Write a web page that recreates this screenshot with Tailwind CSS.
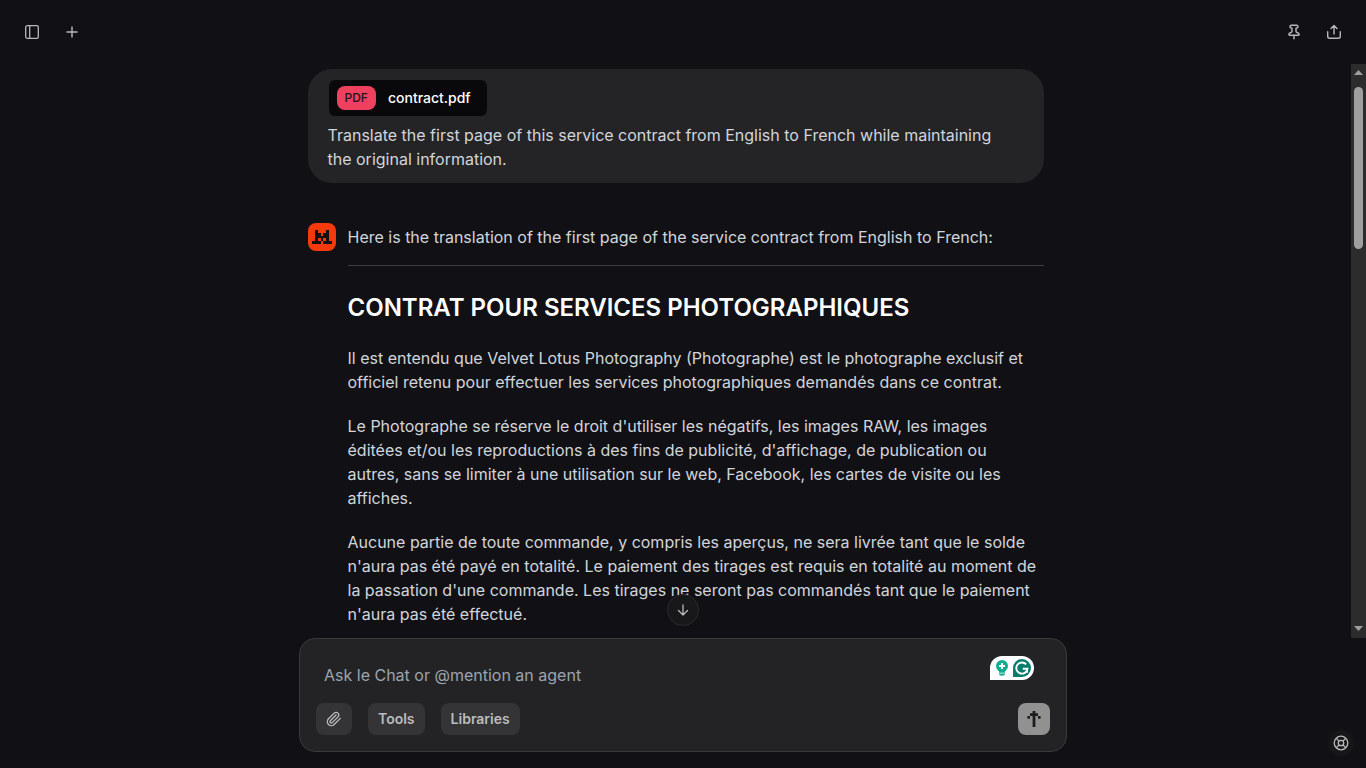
<!DOCTYPE html>
<html lang="en">
<head>
<meta charset="utf-8">
<meta name="viewport" content="width=device-width, initial-scale=1">
<title>le Chat</title>
<script src="https://cdn.jsdelivr.net/npm/@tailwindcss/browser@4"></script>
</head>
<body class="flex h-screen flex-col overflow-hidden bg-[#111115] font-['Inter','Liberation_Sans',sans-serif] text-[#d1d5db]">
<header class="flex h-16 shrink-0 items-center justify-between px-4 text-[#b8b8ba]">
  <div class="flex gap-2">
    <button aria-label="Toggle sidebar" class="grid size-8 place-items-center"><svg class="size-4" viewBox="0 0 16 16" fill="none" stroke="currentColor" stroke-width="1.3"><rect x="1.7" y="1.7" width="12.6" height="12.6" rx="1.6"/><path d="M5.7 2v12"/></svg></button>
    <button aria-label="New chat" class="grid size-8 place-items-center"><svg class="size-4" viewBox="0 0 16 16" fill="none" stroke="currentColor" stroke-width="1.4" stroke-linecap="round"><path d="M8 3v10M3 8h10"/></svg></button>
  </div>
  <div class="flex gap-2">
    <button aria-label="Pin" class="grid size-8 place-items-center"><svg class="size-4" viewBox="0 0 24 24" fill="none" stroke="currentColor" stroke-width="2.2" stroke-linecap="round" stroke-linejoin="round"><path d="M12 17v5M9 10.76a2 2 0 0 1-1.11 1.79l-1.78.9A2 2 0 0 0 4.500 15.24V16a1 1 0 0 0 1 1h13a1 1 0 0 0 1-1v-.76a2 2 0 0 0-1.610-1.79l-1.78-.9A2 2 0 0 1 15 10.76V7a1 1 0 0 1 1-1 2 2 0 0 0 0-4H8a2 2 0 0 0 0 4 1 1 0 0 1 1 1z"/></svg></button>
    <button aria-label="Share" class="grid size-8 place-items-center"><svg class="size-4" viewBox="0 0 16 16" fill="none" stroke="currentColor" stroke-width="1.4" stroke-linecap="round" stroke-linejoin="round"><path d="M8 10V1.7M5 4.5l3-3 3 3M1.7 7.7v4.6a2 2 0 0 0 2 2h8.600a2 2 0 0 0 2-2V7.700"/></svg></button>
  </div>
</header>

<div class="flex min-h-0 flex-1">
  <main class="min-w-0 flex-1 overflow-hidden">
    <div class="mx-auto flex max-w-[736px] flex-col gap-10 pt-[5px]">
      <section class="rounded-3xl bg-[#242426] px-5 pt-[11px] pb-3">
        <div class="ml-px flex h-9 w-fit items-center gap-3 rounded-md bg-[#09090b] pr-4 pl-2">
          <span class="flex h-6 items-center rounded-lg bg-[#ef4060] px-2 text-xs font-medium text-[#2a1018]">PDF</span>
          <span class="text-sm font-medium text-white">contract.pdf</span>
        </div>
        <p class="mt-[7px] pr-5 leading-6">Translate the first page of this service contract from English to French while maintaining the original information.</p>
      </section>
      <section class="flex gap-3">
        <div class="grid size-7 shrink-0 place-items-center rounded-lg bg-[#f23a0c]"><svg class="h-[14px] w-5" viewBox="0 0 7 5" preserveAspectRatio="none" fill="#15100f" shape-rendering="crispEdges" role="img" aria-label="le Chat"><path d="M1 0h1v1h1v1h1v-1h1v-1h1v4h1v1h-3v-1h1v-1h-1v1h-1v-1h-1v1h1v1h-3v-1h1z"/></svg></div>
        <article class="min-w-0 flex-1 leading-6">
          <p class="mt-[2px]">Here is the translation of the first page of the service contract from English to French:</p>
          <hr class="mt-4 border-[#3a3f49]">
          <h1 class="mt-6 text-2xl leading-9 font-semibold text-white">CONTRAT POUR SERVICES PHOTOGRAPHIQUES</h1>
          <p class="mt-5 pr-1">Il est entendu que Velvet Lotus Photography (Photographe) est le photographe exclusif et officiel retenu pour effectuer les services photographiques demandés dans ce contrat.</p>
          <p class="mt-5 pr-1">Le Photographe se réserve le droit d'utiliser les négatifs, les images RAW, les images éditées et/ou les reproductions à des fins de publicité, d'affichage, de publication ou autres, sans se limiter à une utilisation sur le web, Facebook, les cartes de visite ou les affiches.</p>
          <p class="mt-5 pr-1">Aucune partie de toute commande, y compris les aperçus, ne sera livrée tant que le solde n'aura pas été payé en totalité. Le paiement des tirages est requis en totalité au moment de la passation d'une commande. Les tirages ne seront pas commandés tant que le paiement n'aura pas été effectué.</p>
        </article>
      </section>
    </div>
  </main>
  <div class="flex w-[15px] shrink-0 flex-col items-center bg-[#2c2c2c]" aria-hidden="true">
    <svg class="mt-[6px] h-[5px] w-[9px]" viewBox="0 0 9 5" fill="#9f9f9f"><path d="M4.500 0 9 5H0z"/></svg>
    <div class="mt-3 h-[162px] w-[9px] rounded-full bg-[#9f9f9f]"></div>
    <svg class="mt-auto mb-[7px] h-[5px] w-[9px]" viewBox="0 0 9 5" fill="#9f9f9f"><path d="M0 0h9L4.500 5z"/></svg>
  </div>
</div>

<footer class="relative shrink-0 px-4 pb-4">
  <button aria-label="Scroll to bottom" class="absolute -top-11 left-1/2 grid size-8 -translate-x-1/2 place-items-center rounded-full border border-[#2a2a2c] bg-[#18181a] text-[#b8b8ba]"><svg class="size-4" viewBox="0 0 16 16" fill="none" stroke="currentColor" stroke-width="1.3" stroke-linecap="round" stroke-linejoin="round"><path d="M8 3v10M3.500 8.500 8 13l4.500-4.500"/></svg></button>
  <form class="relative mx-auto max-w-[768px] rounded-2xl border border-[#39393b] bg-[#232325] p-4">
    <input aria-label="Message" placeholder="Ask le Chat or @mention an agent" class="mt-2 block h-6 w-full px-2 leading-6 outline-none placeholder:text-[#9ca3af]">
    <div class="mt-4 flex items-center gap-4 text-sm font-semibold text-[#bcbcbd]">
      <button type="button" aria-label="Attach file" class="grid h-8 w-9 place-items-center rounded-lg bg-[#343436]"><svg class="size-4" viewBox="0 0 24 24" fill="none" stroke="currentColor" stroke-width="2" stroke-linecap="round" stroke-linejoin="round"><path d="m21.440 11.050-9.190 9.190a6 6 0 0 1-8.490-8.490l8.570-8.570A4 4 0 1 1 18 8.840l-8.590 8.570a2 2 0 0 1-2.830-2.830l8.490-8.480"/></svg></button>
      <button type="button" class="h-8 rounded-lg bg-[#343436] px-[10px]">Tools</button>
      <button type="button" class="h-8 rounded-lg bg-[#343436] px-[10px]">Libraries</button>
      <button type="submit" aria-label="Send" class="ml-auto grid size-8 place-items-center rounded-lg bg-[#919191]"><svg class="h-4 w-[14px]" viewBox="0 0 14 16" fill="#1c1c1c"><path d="M5.600 0h2.800v2.300h2.600v2.700h2.600v2.700h-2.600v-2.700h-2.600v11h-2.800v-11h-2.600v2.700h-2.600v-2.700h2.600v-2.700h2.600z"/></svg></button>
    </div>
    <div class="absolute top-[17px] right-8 flex h-6 w-11 items-center justify-between rounded-xl rounded-bl-none bg-white pr-[3px] pl-[6px]">
      <svg class="h-4 w-3" viewBox="0 0 12 16" fill="#12ad90"><circle cx="6" cy="6" r="6"/><path d="M3 11h6v1.800h-6zM3 13.500h6a3 2.200 0 0 1-6 0z"/><path d="M6 3v6M3 6h6" stroke="#fff" stroke-width="1.900"/></svg>
      <svg class="size-[18px]" viewBox="0 0 18 18"><path d="M9 0a9 9 0 1 1 0 18H0V9a9 9 0 0 1 9-9z" fill="#087d6b"/><path d="M13.200 5.400A5.600 5.600 0 1 0 14.500 9.700H9.800M14 9.700v4" fill="none" stroke="#fff" stroke-width="1.900"/></svg>
    </div>
  </form>
  <button aria-label="Help" class="absolute right-3 bottom-3 grid size-[26px] place-items-center rounded-full bg-[#171719] text-[#b8b8ba]"><svg class="size-4" viewBox="0 0 16 16" fill="none" stroke="currentColor" stroke-width="1.300"><circle cx="8" cy="8" r="6.800"/><circle cx="8" cy="8" r="2.700"/><path d="m3.200 3.200 2.900 2.900M12.800 3.200 9.900 6.100M3.200 12.800l2.900-2.900M12.800 12.800 9.900 9.900"/></svg></button>
</footer>
</body>
</html>
